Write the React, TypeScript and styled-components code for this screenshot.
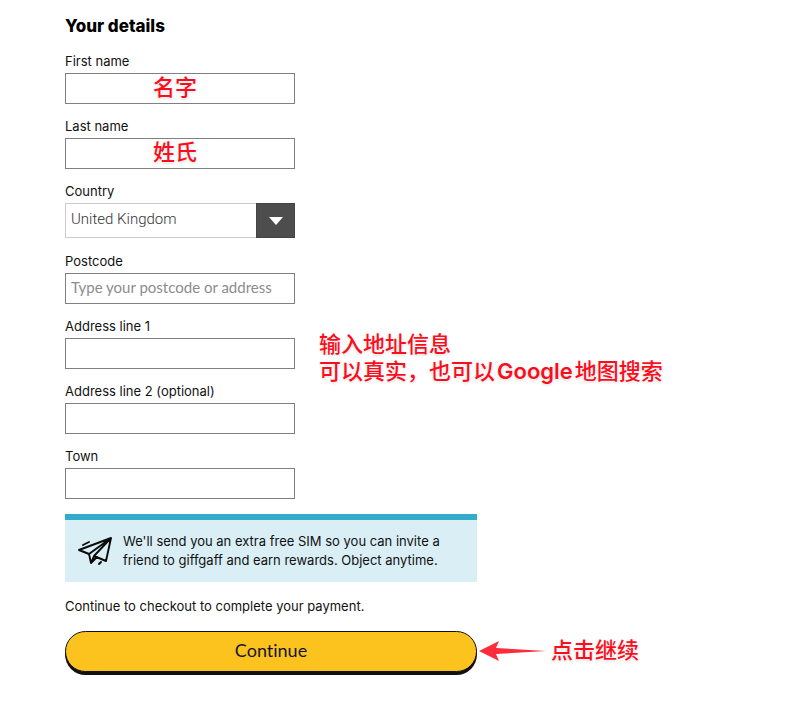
import React from "react";
import styled, { createGlobalStyle } from "styled-components";

const Global = createGlobalStyle`
  *, *::before, *::after { box-sizing: border-box; }
  body { margin: 0; background: #fff; color: #111; font-family: Inter, "Noto Sans CJK SC", sans-serif; }
`;

const Page = styled.main`
  padding: 14px 64px 24px 65px;
`;

const Form = styled.form`
  max-width: 412px;
`;

const Heading = styled.h1`
  margin: 0 0 13px;
  font-size: 17px;
  line-height: 24px;
  font-weight: 800;
  color: #000;
`;

const Field = styled.div`
  position: relative;
  max-width: 230px;
  margin-bottom: 12px;
`;

const Label = styled.label`
  display: block;
  margin-bottom: 2px;
  font-size: 13px;
  line-height: 20px;
`;

const Input = styled.input`
  display: block;
  width: 100%;
  height: 31px;
  padding: 0 5px 3px;
  border: 1px solid #808080;
  border-radius: 0;
  background: #fff;
  color: #444;
  font: 400 15px Lato, sans-serif;
  &::placeholder { color: #8c8c8c; opacity: 1; }
`;

const SelectBox = styled.div`
  display: grid;
  grid-template-columns: 1fr;
  align-items: stretch;
`;

const Select = styled.select`
  grid-area: 1 / 1;
  appearance: none;
  width: 100%;
  height: 35px;
  margin-bottom: 1px;
  padding: 0 44px 3px 5px;
  border: 1px solid #ccc;
  border-radius: 0;
  background: #fff;
  color: #333;
  font: 300 15px Roboto, sans-serif;
`;

const SelectArrow = styled.span`
  grid-area: 1 / 1;
  justify-self: end;
  display: flex;
  align-items: center;
  justify-content: center;
  width: 39px;
  height: 35px;
  border: 1px solid #444;
  background: #4d4d4d;
  pointer-events: none;
`;

const Notice = styled.aside`
  display: flex;
  align-items: center;
  gap: 9px;
  margin-top: 15px;
  padding: 12px 13px;
  border-top: 6px solid #33accb;
  background: #d9eef5;
`;

const NoticeText = styled.p`
  flex: 1;
  margin: 0;
  font-size: 13px;
  line-height: 19px;
`;

const Hint = styled.p`
  margin: 14px 0 15px;
  font-size: 13px;
  line-height: 20px;
`;

const Action = styled.div`
  position: relative;
`;

const Submit = styled.button`
  display: block;
  width: 100%;
  height: 41px;
  padding: 0 0 3px;
  border: 1px solid #111;
  border-radius: 21px;
  background: #fcc31e;
  box-shadow: 0 3px 0 #111;
  color: #141428;
  font: 400 18px Lato, sans-serif;
  font-variant-ligatures: none;
`;

const Note = styled.span<{ $place: "inside" | "beside" | "action" }>`
  position: absolute;
  ${(p) =>
    p.$place === "inside"
      ? "left: 88px; bottom: 3px;"
      : p.$place === "beside"
        ? "left: calc(100% + 24px); top: 15px;"
        : "left: calc(100% + 2px); top: 6px;"}
  display: ${(p) => (p.$place === "action" ? "flex" : "block")};
  align-items: center;
  gap: 4px;
  white-space: nowrap;
  pointer-events: none;
  color: #fb0d1b;
  font-family: Inter, "Noto Sans CJK SC", sans-serif;
  font-size: 22px;
  font-weight: 500;
  line-height: 27px;
  text-shadow: 0 0 2px #fff, 0 0 2px #fff, 0 1px 3px rgba(0, 0, 0, 0.2);
`;

const Latin = styled.span`
  margin: 0 2px;
  font-weight: 600;
`;

const PaperPlane = () => (
  <svg width="36" height="30" viewBox="0 0 36 30" fill="none" stroke="#0b0b0b" strokeWidth="1.9" strokeLinecap="round" strokeLinejoin="round" aria-hidden="true">
    <path d="M33 2 1 14l10 4L33 2 16 20l-3 7-2-9M33 2 28 25l-12-5-3 7 6-6" />
    <path d="M5 9l6-3M21 28l2-2" />
  </svg>
);

const Pointer = () => (
  <svg width="68" height="22" viewBox="0 0 68 22" aria-hidden="true">
    <path d="M0 11 20 1 17 8 67 11 17 14 20 21Z" fill="#fb2c3b" />
  </svg>
);

type TextFieldProps = { id: string; label: string; placeholder?: string; note?: React.ReactNode };

const TextField = ({ id, label, placeholder, note }: TextFieldProps) => (
  <Field>
    <Label htmlFor={id}>{label}</Label>
    <Input id={id} name={id} type="text" placeholder={placeholder} />
    {note}
  </Field>
);

export default function App() {
  return (
    <>
      <Global />
      <Page>
        <Form onSubmit={(e) => e.preventDefault()}>
          <Heading>Your details</Heading>
          <TextField id="first" label="First name" note={<Note $place="inside">名字</Note>} />
          <TextField id="last" label="Last name" note={<Note $place="inside">姓氏</Note>} />
          <Field>
            <Label htmlFor="country">Country</Label>
            <SelectBox>
              <Select id="country" name="country">
                <option>United Kingdom</option>
              </Select>
              <SelectArrow>
                <svg width="14" height="8" viewBox="0 0 14 8" aria-hidden="true">
                  <path d="M0 0h14L7 8Z" fill="#fff" />
                </svg>
              </SelectArrow>
            </SelectBox>
          </Field>
          <TextField id="postcode" label="Postcode" placeholder="Type your postcode or address" />
          <TextField
            id="line1"
            label="Address line 1"
            note={
              <Note $place="beside">
                输入地址信息
                <br />
                可以真实，也可以<Latin>Google</Latin>地图搜索
              </Note>
            }
          />
          <TextField id="line2" label="Address line 2 (optional)" />
          <TextField id="town" label="Town" />
          <Notice>
            <PaperPlane />
            <NoticeText>
              We'll send you an extra free SIM so you can invite a friend to giffgaff and earn rewards. Object anytime.
            </NoticeText>
          </Notice>
          <Hint>Continue to checkout to complete your payment.</Hint>
          <Action>
            <Submit type="submit">Continue</Submit>
            <Note $place="action">
              <Pointer />
              点击继续
            </Note>
          </Action>
        </Form>
      </Page>
    </>
  );
}
